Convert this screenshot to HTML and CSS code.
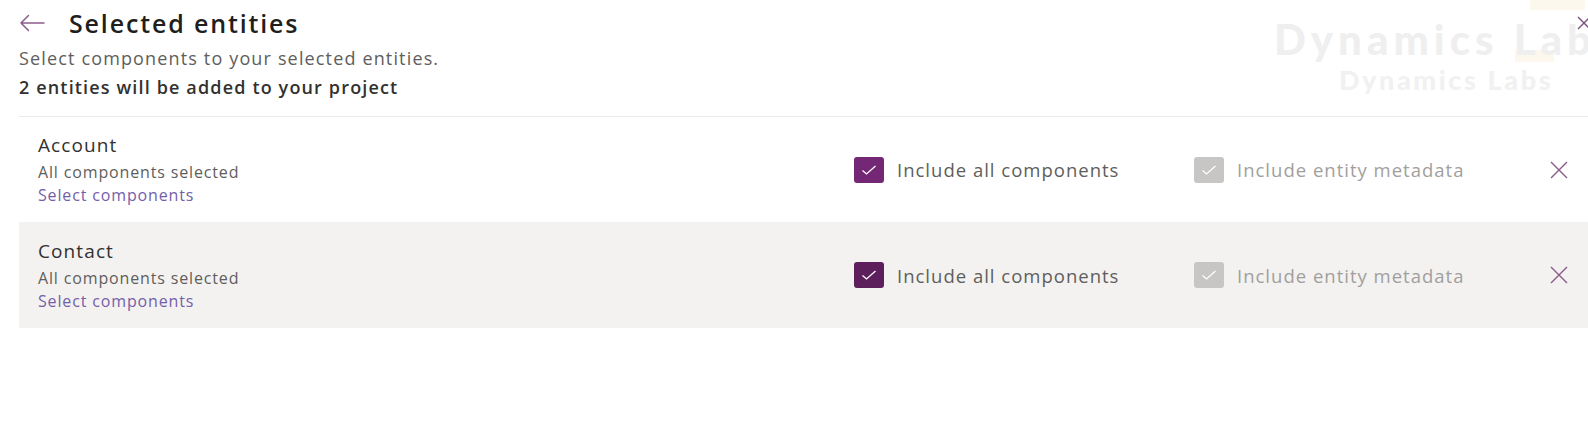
FILE: index.html
```html
<!DOCTYPE html>
<html lang="en">
<head>
<meta charset="utf-8">
<title>Selected entities</title>
<link rel="stylesheet" href="styles.css">
</head>
<body>
<div class="page">
  <span class="tint tint-a" aria-hidden="true"></span>
  <span class="tint tint-b" aria-hidden="true"></span>
  <div class="watermark" aria-hidden="true">
    <span class="wm-big">Dynamics Lab</span>
    <span class="wm-small">Dynamics Labs</span>
  </div>
  <svg class="close-top" width="16" height="16" viewBox="0 0 16 16"><path d="M2 2 L14 14 M14 2 L2 14" stroke="#7b4f7b" stroke-width="1.4" fill="none"/></svg>
  <header class="header">
    <div class="title-row">
      <svg class="back" width="26" height="18" viewBox="0 0 26 18"><path d="M25 9 H2 M9.5 1.5 L2 9 L9.5 16.5" stroke="#8c5c8c" stroke-width="1.5" fill="none" stroke-linecap="round" stroke-linejoin="round"/></svg>
      <h1 class="title">Selected entities</h1>
    </div>
    <p class="subtitle">Select components to your selected entities.</p>
    <p class="count">2 entities will be added to your project</p>
  </header>
  <div class="list">
    <div class="row">
      <div class="entity">
        <div class="name">Account</div>
        <div class="status">All components selected</div>
        <a class="link">Select components</a>
      </div>
      <label class="check">
        <span class="box box-on"><svg width="16" height="12" viewBox="0 0 16 12"><path d="M1.5 6.5 L5.5 10 L14.5 2" stroke="#fff" stroke-width="1.3" fill="none"/></svg></span>
        <span class="label">Include all components</span>
      </label>
      <label class="check">
        <span class="box box-off"><svg width="16" height="12" viewBox="0 0 16 12"><path d="M1.5 6.5 L5.5 10 L14.5 2" stroke="#fff" stroke-width="1.3" fill="none"/></svg></span>
        <span class="label label-off">Include entity metadata</span>
      </label>
      <svg class="remove" width="18" height="18" viewBox="0 0 18 18"><path d="M1 1 L17 17 M17 1 L1 17" stroke="#8a5a8a" stroke-width="1.4" fill="none"/></svg>
    </div>
    <div class="row row-alt">
      <div class="entity">
        <div class="name">Contact</div>
        <div class="status">All components selected</div>
        <a class="link">Select components</a>
      </div>
      <label class="check">
        <span class="box box-dark"><svg width="16" height="12" viewBox="0 0 16 12"><path d="M1.5 6.5 L5.5 10 L14.5 2" stroke="#fff" stroke-width="1.3" fill="none"/></svg></span>
        <span class="label">Include all components</span>
      </label>
      <label class="check">
        <span class="box box-off"><svg width="16" height="12" viewBox="0 0 16 12"><path d="M1.5 6.5 L5.5 10 L14.5 2" stroke="#fff" stroke-width="1.3" fill="none"/></svg></span>
        <span class="label label-off">Include entity metadata</span>
      </label>
      <svg class="remove" width="18" height="18" viewBox="0 0 18 18"><path d="M1 1 L17 17 M17 1 L1 17" stroke="#8a5a8a" stroke-width="1.4" fill="none"/></svg>
    </div>
  </div>
</div>
</body>
</html>
```

FILE: styles.css
```css
html, body {
  margin: 0;
  padding: 0;
  background: #ffffff;
}
body {
  font-family: "Open Sans", "Noto Sans", sans-serif;
  color: #323130;
  width: 1588px;
  height: 437px;
  overflow: hidden;
}
.page {
  position: relative;
  height: 437px;
  overflow: hidden;
}
.tint {
  position: absolute;
  background: #fdf8ee;
}
.tint-a {
  left: 1530px;
  top: 0;
  width: 55px;
  height: 10px;
}
.tint-b {
  left: 1515px;
  top: 50px;
  width: 39px;
  height: 12px;
}
.watermark {
  position: absolute;
  top: 18px;
  left: 1274px;
  display: flex;
  flex-direction: column;
  align-items: flex-start;
  white-space: nowrap;
  font-family: Lato, "Open Sans", sans-serif;
  font-weight: 900;
  color: #efefef;
  line-height: 1;
}
.wm-big {
  font-size: 42px;
  letter-spacing: 5px;
}
.wm-small {
  font-size: 27px;
  letter-spacing: 2.6px;
  margin-top: 6px;
  margin-left: 65px;
  color: #f1f1f1;
}
.close-top {
  position: absolute;
  top: 15px;
  left: 1576px;
}
.header {
  padding: 6px 0 0 19px;
}
.title-row {
  display: flex;
  align-items: center;
  height: 34px;
}
.back {
  margin-right: 24px;
}
.title {
  margin: 0;
  font-size: 25px;
  letter-spacing: 1.85px;
  font-weight: 600;
  color: #201f1e;
}
.subtitle {
  margin: 6px 0 0;
  font-size: 18px;
  letter-spacing: 1.15px;
  line-height: 24px;
  color: #605e5c;
}
.count {
  margin: 5px 0 0;
  font-size: 18px;
  letter-spacing: 1.15px;
  line-height: 24px;
  font-weight: 600;
  color: #323130;
}
.list {
  margin: 17px 0 0 19px;
  border-top: 1px solid #edebe9;
}
.row {
  display: grid;
  grid-template-columns: 1fr 340px 356px 18px;
  align-items: center;
  height: 105px;
  padding: 0 20px 0 19px;
}
.row-alt {
  background: #f3f2f1;
  height: 106px;
}
.entity {
  display: flex;
  flex-direction: column;
  padding-bottom: 2px;
}
.name {
  font-size: 19px;
  letter-spacing: 1.1px;
  line-height: 31px;
  color: #323130;
}
.status {
  font-size: 16px;
  letter-spacing: 0.85px;
  line-height: 23px;
  color: #605e5c;
}
.link {
  font-size: 16px;
  letter-spacing: 0.85px;
  line-height: 23px;
  color: #7460a8;
}
.check {
  display: flex;
  align-items: center;
}
.box {
  width: 30px;
  height: 26px;
  border-radius: 3px;
  display: flex;
  align-items: center;
  justify-content: center;
  margin-right: 13px;
}
.box-on { background: #742774; }
.box-dark { background: #5c1f5c; }
.box-off { background: #c8c6c4; }
.label {
  font-size: 18.5px;
  letter-spacing: 1px;
  color: #605e5c;
}
.label-off {
  color: #a19f9d;
}
```
